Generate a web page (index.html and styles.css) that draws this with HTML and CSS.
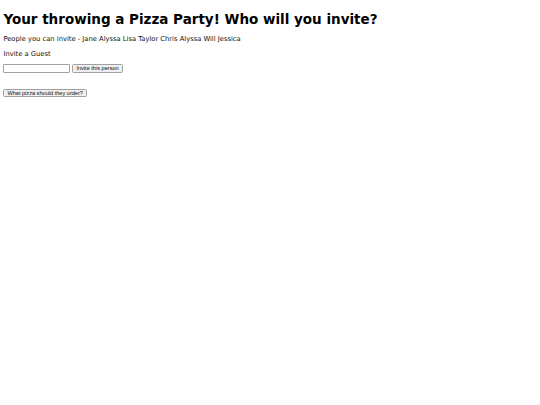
FILE: index.html
```html
<!DOCTYPE html>
<html>
<head>
<meta charset="utf-8">
<link rel="stylesheet" href="styles.css">
</head>
<body>
<h1 class="title">Your throwing a Pizza Party! Who will you invite?</h1>
<p class="line">People you can invite - Jane Alyssa Lisa Taylor Chris Alyssa Will Jessica</p>
<p class="line">Invite a Guest</p>
<div class="form-row">
  <input class="guest-input" type="text">
  <button class="btn">Invite this person</button>
</div>
<div class="order-row">
  <button class="btn btn-order">What pizza should they order?</button>
</div>
</body>
</html>
```
FILE: styles.css
```css
body {
  margin: 3.4px;
  font-family: "DejaVu Sans", sans-serif;
  font-size: 6.75px;
  color: #111;
  background: #fff;
}
.title {
  font-size: 13.5px;
  font-weight: bold;
  line-height: 16px;
  margin: 8px 0 8px;
  color: #000;
}
.line {
  margin: 6.5px 0;
  line-height: 8px;
}
.form-row {
  display: flex;
  align-items: center;
  gap: 2px;
  margin-top: 6.5px;
}
.guest-input {
  box-sizing: border-box;
  width: 67px;
  height: 9px;
  padding: 0 1px;
  border: 1px solid #a0a0a0;
  border-radius: 1px;
  font-size: 5.6px;
  margin: 0;
  background: #fff;
}
.btn {
  box-sizing: border-box;
  font-family: "Liberation Sans", Arial, sans-serif;
  font-size: 5.6px;
  height: 9px;
  line-height: 7px;
  padding: 0 3px;
  border: 1px solid #a0a0a0;
  border-radius: 1.5px;
  background: #efefef;
  color: #111;
  margin: 0;
}
.btn-order {
  height: 8px;
  line-height: 6px;
}
.order-row {
  margin-top: 16px;
}
```
